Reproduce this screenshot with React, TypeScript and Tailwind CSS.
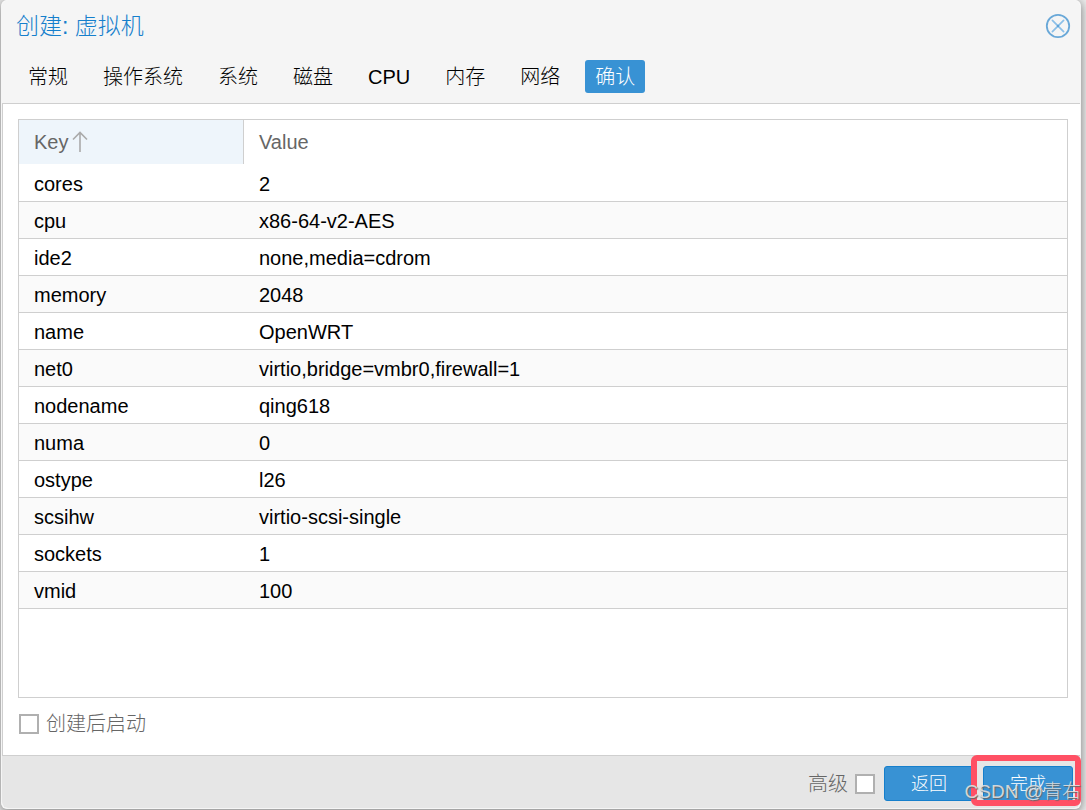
import { useState } from "react";

const tabs = ["常规", "操作系统", "系统", "磁盘", "CPU", "内存", "网络", "确认"];

const rows: [string, string][] = [
  ["cores", "2"],
  ["cpu", "x86-64-v2-AES"],
  ["ide2", "none,media=cdrom"],
  ["memory", "2048"],
  ["name", "OpenWRT"],
  ["net0", "virtio,bridge=vmbr0,firewall=1"],
  ["nodename", "qing618"],
  ["numa", "0"],
  ["ostype", "l26"],
  ["scsihw", "virtio-scsi-single"],
  ["sockets", "1"],
  ["vmid", "100"],
];

const checkbox =
  "size-5 shrink-0 appearance-none border-2 border-[#b0b0b0] bg-white checked:bg-[#3892d4]";
const action =
  "h-[35px] w-[90px] rounded-[3px] border border-[#157fcc] bg-[#3892d4] text-lg leading-6 text-white";
const cell = "border-b border-[#cfcfcf] p-0 pt-0.5 pl-[15px]";

export default function App() {
  const [active, setActive] = useState("确认");
  return (
    <div className="flex min-h-screen flex-col overflow-hidden bg-[#ececec] pr-[5px] pb-px pl-px font-['Liberation_Sans','Noto_Sans_CJK_SC',sans-serif] text-xl leading-6 font-light">
      <main className="flex grow flex-col rounded-md border-r border-b border-l border-[#f5f5f5] bg-white shadow-[0_2px_10px_1px_#888888]">
        <header className="rounded-t-md border-b border-[#cfcfcf] bg-[#f5f5f5] pb-[10px]">
          <div className="flex items-center justify-between pt-3 pr-[9px] pl-[14px]">
            <h1 className="text-[23px] leading-7 text-[#157fcc]">创建: 虚拟机</h1>
            <button type="button" aria-label="关闭" className="size-[26px]">
              <svg viewBox="0 0 26 26" className="size-full" fill="none">
                <circle cx="13" cy="13" r="11.2" stroke="#69a8d8" strokeWidth="1.8" />
                <path d="M7.4 7.4 18.6 18.6M18.6 7.4 7.4 18.6" stroke="#8bbfe8" strokeWidth="1.7" strokeLinecap="round" />
                <circle cx="13" cy="13" r="1.2" fill="#5ea2d6" />
              </svg>
            </button>
          </div>
          <nav className="flex gap-[15px] pt-5 pl-4" role="tablist">
            {tabs.map((t) => (
              <button
                key={t}
                type="button"
                role="tab"
                aria-selected={t === active}
                onClick={() => setActive(t)}
                className={
                  t === active
                    ? "h-[33px] rounded-[3px] bg-[#3892d4] px-[10px] whitespace-nowrap text-white"
                    : "h-[33px] rounded-[3px] px-[10px] whitespace-nowrap text-black"
                }
              >
                {t}
              </button>
            ))}
          </nav>
        </header>

        <section className="flex grow flex-col border-l border-[#cfcfcf] pt-[15px] pr-3 pb-[19px] pl-[15px]">
          <div className="grow border border-[#cfcfcf] bg-white">
            <table className="w-full table-fixed border-separate border-spacing-0 text-left">
              <thead>
                <tr className="h-[45px] text-[#666666]">
                  <th aria-sort="ascending" className="w-[225px] p-0 pb-px font-normal">
                    <div className="flex h-11 items-center gap-1 border-r border-[#cfcfcf] bg-[#eef5fb] pl-[15px]">
                      Key
                      <svg viewBox="0 0 16 22" className="h-[22px] w-4" fill="none" stroke="#aaaaaa" strokeWidth="1.6">
                        <path d="M8 21V1.5M1 8.5l7-7 7 7" />
                      </svg>
                    </div>
                  </th>
                  <th className="p-0 pb-px pl-[15px] font-normal">Value</th>
                </tr>
              </thead>
              <tbody>
                {rows.map(([k, v]) => (
                  <tr key={k} className="h-[37px] text-black even:bg-[#fafafa]">
                    <td className={cell}>{k}</td>
                    <td className={cell}>{v}</td>
                  </tr>
                ))}
              </tbody>
            </table>
          </div>
          <label className="mt-[14px] flex items-center gap-[7px] self-start pl-px text-[#666666]">
            <input type="checkbox" className={checkbox} />
            创建后启动
          </label>
        </section>

        <footer className="flex items-center justify-end gap-[9px] rounded-b-md border-t border-[#cfcfcf] bg-[#e6e6e6] pt-[10px] pr-[7px] pb-[7px]">
          <label className="flex items-center gap-[7px] text-[#666666]">
            高级
            <input type="checkbox" className={checkbox} />
          </label>
          <button type="button" className={action}>
            返回
          </button>
          <div className="relative">
            <button type="button" className={action}>
              完成
            </button>
            <div className="pointer-events-none absolute -top-[11px] -right-2 -bottom-[5px] -left-3 rounded-md border-[6px] border-[#ff5064]" />
            <div className="pointer-events-none absolute -right-2 -bottom-[3px] text-[19px] whitespace-nowrap text-[#e2e2e2]/90 [text-shadow:1px_1px_1px_#666666]">
              CSDN @青右
            </div>
          </div>
        </footer>
      </main>
    </div>
  );
}
